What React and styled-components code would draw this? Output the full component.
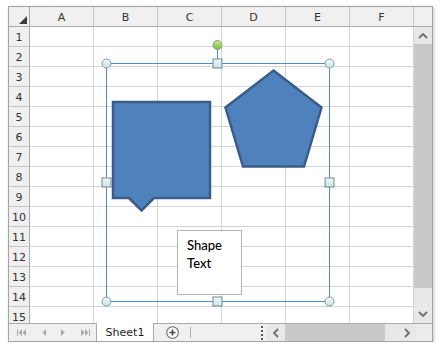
import React from 'react';
import styled, { createGlobalStyle } from 'styled-components';

const GlobalStyle = createGlobalStyle`
    body {
        margin: 0;
        background: #ffffff;
        font-family: "Noto Sans", "DejaVu Sans", sans-serif;
    }
`;

const columns = ['A', 'B', 'C', 'D', 'E', 'F'];
const rows = Array.from({ length: 15 }, (_, i) => i + 1);

function Handle({ x, y, round }) {
    if (round) {
        return <circle cx={x} cy={y} r={4.5} fill="url(#handleFill)" stroke="#8c9696" strokeWidth={1} />;
    }
    return <rect x={x - 4.5} y={y - 4.5} width={9} height={9} fill="url(#handleFill)" stroke="#7b8585" strokeWidth={1} />;
}

function Shapes() {
    return (
        <Canvas viewBox="9 7 422 316" width={422} height={316}>
            <defs>
                <linearGradient id="handleFill" x1="0" y1="0" x2="0" y2="1">
                    <stop offset="0" stopColor="#eef9fb" />
                    <stop offset="1" stopColor="#c4e4ea" />
                </linearGradient>
                <linearGradient id="rotFill" x1="0" y1="0" x2="0" y2="1">
                    <stop offset="0" stopColor="#c8f08a" />
                    <stop offset="1" stopColor="#6cc22a" />
                </linearGradient>
            </defs>

            <path
                d="M113 102 H210 V198 H154 L141.5 210.5 L129 198 H113 Z"
                fill="#4f81bd" stroke="#385d8a" strokeWidth={2.5} strokeLinejoin="miter"
            />
            <path
                d="M273.5 70.5 L321.5 107.5 L304 166.5 H243 L225.5 107.5 Z"
                fill="#4f81bd" stroke="#385d8a" strokeWidth={2.5}
            />

            <rect x={177.5} y={230.5} width={64} height={64} fill="#ffffff" stroke="#b4b4b4" />
            <ShapeText x={187} y={250}>Shape</ShapeText>
            <ShapeText x={187} y={268}>Text</ShapeText>

            <rect x={106.5} y={63.5} width={223} height={238} fill="none" stroke="#4f8ad4" strokeWidth={1} />
            <line x1={217.5} y1={45} x2={217.5} y2={63} stroke="#4f8ad4" />
            <circle cx={217.5} cy={45} r={4.5} fill="url(#rotFill)" stroke="#8c9696" />

            <Handle x={106.5} y={63.5} round />
            <Handle x={217.5} y={63.5} />
            <Handle x={329.5} y={63.5} round />
            <Handle x={106.5} y={182.5} />
            <Handle x={329.5} y={182.5} />
            <Handle x={106.5} y={301.5} round />
            <Handle x={217.5} y={301.5} />
            <Handle x={329.5} y={301.5} round />
        </Canvas>
    );
}

function Arrow({ dir }) {
    const paths = {
        up: 'M1 5 L5 1 L9 5',
        down: 'M1 1 L5 5 L9 1',
        left: 'M5 1 L1 5 L5 9',
        right: 'M1 1 L5 5 L1 9',
    };
    const vertical = dir === 'up' || dir === 'down';
    return (
        <svg width={vertical ? 10 : 6} height={vertical ? 6 : 10} viewBox={vertical ? '0 0 10 6' : '0 0 6 10'}>
            <path d={paths[dir]} fill="none" stroke="#6e6e6e" strokeWidth={1.8} />
        </svg>
    );
}

function NavIcon({ kind }) {
    const c = '#a9a9a9';
    if (kind === 'first') {
        return (
            <svg width={9} height={7} viewBox="0 0 9 7">
                <rect x={0} y={0} width={1} height={7} fill={c} />
                <path d="M5 0 L1.5 3.5 L5 7 Z M9 0 L5.5 3.5 L9 7 Z" fill={c} />
            </svg>
        );
    }
    if (kind === 'last') {
        return (
            <svg width={9} height={7} viewBox="0 0 9 7">
                <path d="M0 0 L3.5 3.5 L0 7 Z M4 0 L7.5 3.5 L4 7 Z" fill={c} />
                <rect x={8} y={0} width={1} height={7} fill={c} />
            </svg>
        );
    }
    return (
        <svg width={4} height={7} viewBox="0 0 4 7">
            <path d={kind === 'prev' ? 'M4 0 L0.5 3.5 L4 7 Z' : 'M0 0 L3.5 3.5 L0 7 Z'} fill={c} />
        </svg>
    );
}

export default function App() {
    return (
        <>
            <GlobalStyle />
            <Frame>
                <SheetArea>
                    <Grid>
                        <Corner>
                            <svg width={8} height={8} viewBox="0 0 8 8">
                                <path d="M8 0 L8 8 L0 8 Z" fill="#3c3c3c" />
                            </svg>
                        </Corner>
                        {columns.map((c) => (
                            <ColHeader key={c}>{c}</ColHeader>
                        ))}
                        {rows.map((r) => (
                            <React.Fragment key={r}>
                                <RowHeader>{r}</RowHeader>
                                {columns.map((c) => (
                                    <Cell key={c} />
                                ))}
                            </React.Fragment>
                        ))}
                    </Grid>
                    <VScroll>
                        <VScrollHead />
                        <ScrollButton $h={17}><Arrow dir="up" /></ScrollButton>
                        <VThumb />
                        <VTrack />
                        <ScrollButton $h={18}><Arrow dir="down" /></ScrollButton>
                    </VScroll>
                    <Shapes />
                </SheetArea>
                <TabBar>
                    <NavButtons>
                        <NavIcon kind="first" />
                        <NavIcon kind="prev" />
                        <NavIcon kind="next" />
                        <NavIcon kind="last" />
                    </NavButtons>
                    <SheetTab>Sheet1</SheetTab>
                    <TabStrip>
                        <AddButton>
                            <svg width={13} height={13} viewBox="0 0 13 13">
                                <circle cx={6.5} cy={6.5} r={5.8} fill="#ffffff" stroke="#6a6a6a" strokeWidth={1.1} />
                                <path d="M6.5 3.5 V9.5 M3.5 6.5 H9.5" stroke="#4a4a4a" strokeWidth={1.6} />
                            </svg>
                        </AddButton>
                        <Separator />
                    </TabStrip>
                    <Splitter>
                        <span /><span /><span /><span />
                    </Splitter>
                    <HScroll>
                        <HButton><Arrow dir="left" /></HButton>
                        <HThumb />
                        <HTrack />
                        <HButton><Arrow dir="right" /></HButton>
                    </HScroll>
                    <CornerBox />
                </TabBar>
            </Frame>
        </>
    );
}

const Frame = styled.div`
    margin: 6px 0 0 8px;
    width: 423px;
    border: 1px solid #a3a3a3;
    box-shadow: 1px 1px 3px rgba(0, 0, 0, 0.22);
    background: #ffffff;
    display: flex;
    flex-direction: column;
`;

const SheetArea = styled.div`
    position: relative;
    height: 316px;
    display: flex;
    overflow: hidden;
`;

const Canvas = styled.svg`
    position: absolute;
    left: 0;
    top: 0;
    pointer-events: none;
`;

const ShapeText = styled.text`
    font-family: Lato, "Open Sans", sans-serif;
    font-size: 13px;
    font-weight: 500;
    fill: #000000;
`;

const Grid = styled.div`
    display: grid;
    grid-template-columns: 21px repeat(6, 64px);
    grid-auto-rows: 20px;
    align-content: start;
    font-family: "DejaVu Sans", "Noto Sans", sans-serif;
    font-size: 11px;
    color: #333333;
`;

const HeaderCell = styled.div`
    background: #f0f0f0;
    border-right: 1px solid #c6c6c6;
    border-bottom: 1px solid #ababab;
    display: flex;
    align-items: center;
    justify-content: center;
`;

const Corner = styled(HeaderCell)`
    align-items: flex-end;
    justify-content: flex-end;
    padding: 0 2px 2px 0;
    border-right-color: #ababab;
`;

const ColHeader = styled(HeaderCell)`
    padding-top: 1px;
`;

const RowHeader = styled(HeaderCell)`
    border-right-color: #ababab;
    border-bottom-color: #c6c6c6;
    padding-top: 1px;
`;

const Cell = styled.div`
    border-right: 1px solid #d4d4d4;
    border-bottom: 1px solid #d4d4d4;
`;

const VScroll = styled.div`
    width: 18px;
    display: flex;
    flex-direction: column;
    background: #e8e8e8;
`;

const VScrollHead = styled.div`
    height: 19px;
    flex: none;
    background: #f0f0f0;
    border-bottom: 1px solid #ababab;
`;

const ScrollButton = styled.div`
    height: ${(p) => p.$h}px;
    flex: none;
    display: flex;
    align-items: center;
    justify-content: center;
`;

const VThumb = styled.div`
    height: 244px;
    flex: none;
    background: #c9c9c9;
`;

const VTrack = styled.div`
    flex: 1;
`;

const TabBar = styled.div`
    height: 17px;
    border-top: 1px solid #ababab;
    display: flex;
    background: #f0f0f0;
    font-family: "DejaVu Sans", "Noto Sans", sans-serif;
`;

const NavButtons = styled.div`
    width: 88px;
    border-right: 1px solid #ababab;
    display: flex;
    align-items: center;
    justify-content: space-between;
    padding: 0 6px 0 8px;
    box-sizing: border-box;
`;

const SheetTab = styled.div`
    width: 57px;
    margin-top: -1px;
    height: 18px;
    background: #ffffff;
    border-right: 1px solid #ababab;
    display: flex;
    align-items: center;
    justify-content: center;
    font-size: 11px;
    color: #1e1e1e;
    box-sizing: border-box;
`;

const TabStrip = styled.div`
    width: 104px;
    display: flex;
    align-items: center;
`;

const AddButton = styled.div`
    width: 36px;
    display: flex;
    justify-content: center;
`;

const Separator = styled.div`
    width: 1px;
    height: 11px;
    background: #b0b0b0;
`;

const Splitter = styled.div`
    width: 8px;
    display: flex;
    flex-direction: column;
    justify-content: center;
    align-items: center;
    gap: 2px;
    span {
        width: 2px;
        height: 2px;
        background: #555555;
    }
`;

const HScroll = styled.div`
    width: 150px;
    display: flex;
    background: #e8e8e8;
`;

const HButton = styled.div`
    width: 19px;
    display: flex;
    align-items: center;
    justify-content: center;
`;

const HThumb = styled.div`
    width: 100px;
    background: #c9c9c9;
`;

const HTrack = styled.div`
    flex: 1;
`;

const CornerBox = styled.div`
    flex: 1;
    background: #ececec;
`;
